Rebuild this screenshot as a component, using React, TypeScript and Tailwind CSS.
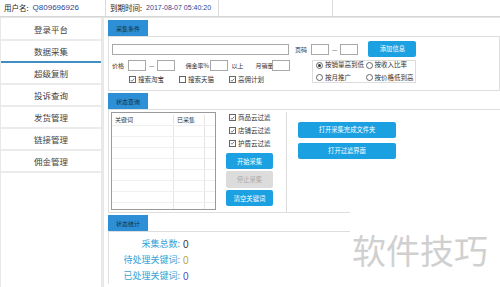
import React from "react";

const font = { fontFamily: '"Noto Sans CJK SC", "Noto Sans", sans-serif' };
const latin = { fontFamily: '"Liberation Sans", "Noto Sans CJK SC", sans-serif' };

function Tab({ label }: { label: string }) {
  return (
    <div className="flex h-[16px] w-[40px] items-center justify-center whitespace-nowrap bg-[#2d8fd5] text-[6px] text-[#10304f]">
      {label}
    </div>
  );
}

function Check({ on, label }: { on: boolean; label: string }) {
  return (
    <div className="flex items-center gap-[2px] whitespace-nowrap text-[6.5px] text-[#333]">
      <span className="flex h-[7px] w-[7px] items-center justify-center border border-[#666] bg-white">
        {on && (
          <svg viewBox="0 0 8 8" className="h-[6px] w-[6px]">
            <path d="M1.2 4 L3.2 6 L6.8 1.8" stroke="#333" strokeWidth="1" fill="none" />
          </svg>
        )}
      </span>
      {label}
    </div>
  );
}

function Radio({ on, label }: { on: boolean; label: string }) {
  return (
    <div className="flex w-[52px] items-center gap-[2px] whitespace-nowrap text-[6.5px] text-[#333]">
      <span className="flex h-[7px] w-[7px] items-center justify-center rounded-full border border-[#666] bg-white">
        {on && <span className="h-[3px] w-[3px] rounded-full bg-[#333]" />}
      </span>
      {label}
    </div>
  );
}

function Btn({ label, className }: { label: string; className: string }) {
  return (
    <div className={"flex items-center justify-center whitespace-nowrap rounded-[2px] text-[6.3px] " + className}>
      {label}
    </div>
  );
}

const menu = ["登录平台", "数据采集", "超级复制", "投诉查询", "发货管理", "链接管理", "佣金管理"];

export default function App() {
  return (
    <div className="relative h-[287px] w-[500px] overflow-hidden bg-white" style={font}>
      {/* top bar */}
      <div className="flex h-[17px] items-center whitespace-nowrap border-b border-[#d6d6d6] text-[7.5px] text-[#222]">
        <div className="flex h-full w-[106px] items-center border-r border-[#dcdcdc] pl-[4px]">
          用户名:
          <span className="ml-[4px] text-[8px] text-[#2f3f8f]" style={latin}>
            Q809696926
          </span>
        </div>
        <div className="flex h-full w-[113px] items-center border-r border-[#dcdcdc] pl-[4px]">
          到期时间:
          <span className="ml-[4px] text-[7px] text-[#2f3f8f]" style={latin}>
            2017-08-07 05:40:20
          </span>
        </div>
        <div className="h-full w-[114px] border-r border-[#dcdcdc]" />
      </div>

      <div className="flex h-[270px] border-t border-[#e6e6e6]">
        {/* sidebar */}
        <div className="w-[104px] border-l border-r-[3px] border-[#e8e8e8] pt-[1px]">
          {menu.map((m, i) => (
            <div
              key={m}
              className={
                "flex h-[22px] items-center justify-center border-b-2 text-[8.5px] text-[#444] " +
                (i === 1 ? "border-[#3f8fc4]" : "border-[#ebebeb]")
              }
            >
              {m}
            </div>
          ))}
        </div>

        {/* main */}
        <div className="flex-1 pl-[4px] pt-[2px]">
          <Tab label="采集条件" />
          <div className="h-[55px] border border-[#dedede] pl-[3px]">
            <div className="mt-[4px] flex h-[16px] items-center whitespace-nowrap text-[6px] text-[#333]">
              <span className="h-[11px] w-[177px] border border-[#a8a8a8]" />
              <span className="ml-[6px]">页码</span>
              <span className="ml-[4px] h-[11px] w-[18px] border border-[#a8a8a8]" />
              <span className="mx-[3px]">—</span>
              <span className="h-[11px] w-[18px] border border-[#a8a8a8]" />
              <Btn label="添加信息" className="ml-[10px] h-[16px] w-[48px] bg-[#1ba1e2] text-white" />
            </div>
            <div className="flex">
              <div className="w-[200px]">
                <div className="mt-[3px] flex h-[11px] items-center whitespace-nowrap text-[6px] text-[#333]">
                  <span className="w-[16px]">价格</span>
                  <span className="h-[11px] w-[18px] border border-[#a8a8a8]" />
                  <span className="mx-[3px]">—</span>
                  <span className="h-[11px] w-[18px] border border-[#a8a8a8]" />
                  <span className="ml-[10px] w-[25px]">佣金率%</span>
                  <span className="h-[11px] w-[18px] border border-[#a8a8a8]" />
                  <span className="ml-[3px] w-[24px]">以上</span>
                  <span className="w-[17px]">月销量</span>
                  <span className="h-[11px] w-[18px] border border-[#a8a8a8]" />
                </div>
                <div className="mt-[4px] flex gap-[15px] pl-[17px]">
                  <Check on label="搜索淘宝" />
                  <Check on={false} label="搜索天猫" />
                  <Check on label="高佣计划" />
                </div>
              </div>
              <div className="mt-[3px] flex h-[23px] w-[104px] flex-col justify-center gap-[3px] border border-[#dcdcdc] pl-[3px]">
                <div className="flex">
                  <Radio on label="按销量高到低" />
                  <Radio on={false} label="按收入比率" />
                </div>
                <div className="flex">
                  <Radio on={false} label="按月推广" />
                  <Radio on={false} label="按价格低到高" />
                </div>
              </div>
            </div>
          </div>

          <div className="mt-[2px]">
            <Tab label="状态查询" />
          </div>
          <div className="flex h-[103px] border-l border-t border-[#dedede] pl-[2px] pt-[2px]">
            <div className="h-[98px] w-[105px] overflow-hidden border border-[#9a9a9a] text-[6px] text-[#333]">
              <div className="flex h-[13px] items-center border-b border-[#eeeeee]">
                <span className="w-[62px] border-r border-[#e4e4e4] pl-[3px]">关键词</span>
                <span className="w-[31px] border-r border-[#e4e4e4] pl-[3px]">已采集</span>
              </div>
              {Array.from({ length: 8 }).map((_, i) => (
                <div key={i} className="flex h-[11px] border-b border-[#f0f0f0]">
                  <span className="w-[62px] border-r border-[#e4e4e4]" />
                  <span className="w-[31px] border-r border-[#e4e4e4]" />
                </div>
              ))}
            </div>
            <div className="ml-[10px] flex w-[61px] flex-col border-r border-[#dcdcdc] pt-[1px]">
              <div className="flex flex-col gap-[3px] pl-[3px]">
                <Check on label="商品云过滤" />
                <Check on label="店铺云过滤" />
                <Check on label="护盾云过滤" />
              </div>
              <Btn label="开始采集" className="mt-[5px] h-[16px] w-[47px] bg-[#1ba1e2] text-white" />
              <Btn label="停止采集" className="mt-[2px] h-[17px] w-[47px] bg-[#dcdcdc] text-[#a8a8a8]" />
              <Btn label="清空关键词" className="mt-[2px] h-[16px] w-[47px] bg-[#1ba1e2] text-white" />
            </div>
            <div className="flex flex-col gap-[5px] pl-[11px] pt-[10px]">
              <Btn label="打开采集完成文件夹" className="h-[16px] w-[98px] bg-[#1ba1e2] text-white" />
              <Btn label="打开过滤界面" className="h-[16px] w-[98px] bg-[#1ba1e2] text-white" />
            </div>
          </div>

          <div className="border-t border-[#dedede] pt-[2px]">
            <Tab label="状态统计" />
          </div>
          <div className="border-l border-t border-[#dedede] pt-[4px] text-[9px]">
            {[
              ["采集总数:", "text-[#333]"],
              ["待处理关键词:", "text-[#b8a23c]"],
              ["已处理关键词:", "text-[#4a4ad0]"],
            ].map(([l, c]) => (
              <div key={l} className="flex h-[16px] items-center whitespace-nowrap">
                <span className="w-[71px] text-right text-[#35a3d6]">{l}</span>
                <span className={"ml-[3px] text-[10px] " + c} style={latin}>
                  0
                </span>
              </div>
            ))}
          </div>
        </div>
      </div>

      <div className="absolute left-[350px] top-[212px] flex h-[75px] w-[150px] items-center bg-white pl-[2px] text-[34px] text-[#d0d0d0]">
        软件技巧
      </div>
    </div>
  );
}
